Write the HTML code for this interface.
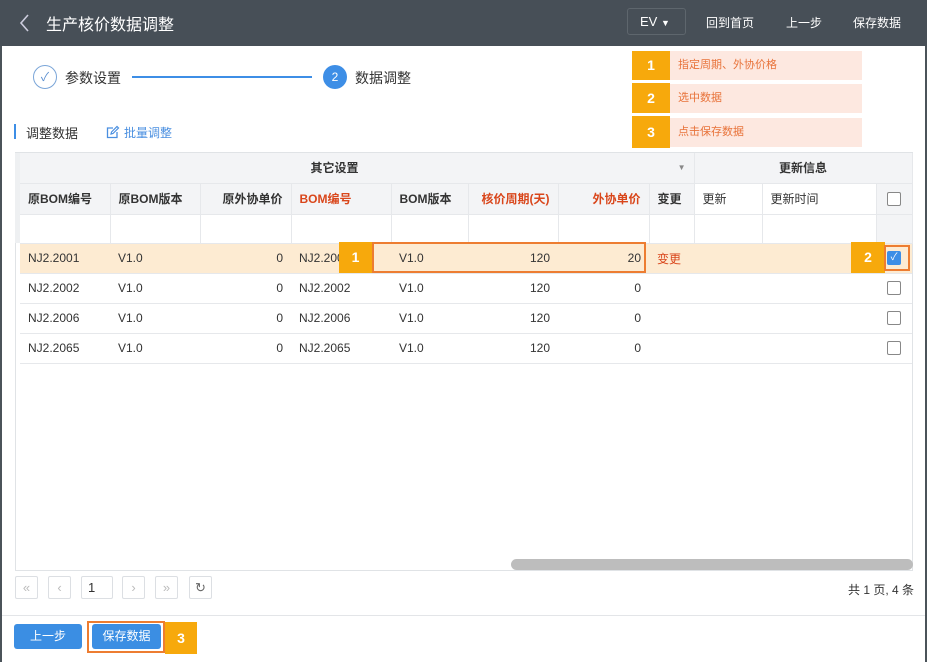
<!DOCTYPE html>
<html><head><meta charset="utf-8"><style>
*{box-sizing:border-box;margin:0;padding:0}
body{width:927px;height:662px;position:relative;background:#fff;font-family:"Liberation Sans","Noto Sans CJK SC",sans-serif;font-size:12px;color:#333;overflow:hidden}
.a{position:absolute}
.hdr{left:0;top:0;width:927px;height:46px;background:#474f57;color:#fff}
.ob{background:#f7a90c;color:#fff;font-weight:bold;font-size:14px;text-align:center}
.pk{background:#fde8e0;color:#e8733a;font-size:11px;padding-left:8px}
td,th{border-right:1px solid #e6e8eb;border-bottom:1px solid #e6e8eb;font-size:12px;padding:0 8px;white-space:nowrap;overflow:hidden}
table{border-collapse:collapse;table-layout:fixed}
th{background:#f3f4f6;font-weight:bold;color:#333;text-align:left}
.r{text-align:right}
.red{color:#d9461b}
.cb{display:inline-block;width:14px;height:14px;border:1px solid #888;border-radius:2px;background:#fff;vertical-align:middle}
.pg{width:23px;height:23px;border:1px solid #dcdfe3;border-radius:2px;color:#bbb;text-align:center;line-height:21px;font-size:13px}
.btn{background:#3b8ee3;color:#fff;border-radius:3px;text-align:center;line-height:24px;font-size:12px}
tr.d td{border-right:none}
</style></head><body>
<div class="a" style="left:0;top:0;width:2px;height:662px;background:#4b5359"></div>
<div class="a" style="right:0;top:0;width:2px;height:662px;background:#4b5359"></div>
<div class="a hdr">
 <svg class="a" style="left:18px;top:13px" width="12" height="20"><path d="M10 2 L3 10 L10 18" stroke="#ccd" stroke-width="1.6" fill="none"/></svg>
 <div class="a" style="left:46px;top:11px;font-size:16px">生产核价数据调整</div>
 <div class="a" style="left:627px;top:8px;width:59px;height:27px;border:1px solid #5e666d;border-radius:3px;font-size:13px;line-height:25px;padding-left:12px">EV <span style="font-size:9px">▼</span></div>
 <div class="a" style="left:706px;top:14px">回到首页</div>
 <div class="a" style="left:786px;top:14px">上一步</div>
 <div class="a" style="left:853px;top:14px">保存数据</div>
</div>
<div class="a" style="left:33px;top:65px;width:24px;height:24px;border:1px solid #7aa5d8;border-radius:50%;color:#5b8fd0;text-align:center;line-height:22px;font-size:12px">✓</div>
<div class="a" style="left:65px;top:68px;font-size:14px">参数设置</div>
<div class="a" style="left:132px;top:76px;width:180px;height:2px;background:#3d8ee6"></div>
<div class="a" style="left:323px;top:65px;width:24px;height:24px;border-radius:50%;background:#3d8ee6;color:#fff;text-align:center;line-height:24px;font-size:12px">2</div>
<div class="a" style="left:355px;top:68px;font-size:14px">数据调整</div>
<div class="a ob" style="left:632px;top:51px;width:38px;height:29px;line-height:29px">1</div>
<div class="a pk" style="left:670px;top:51px;width:192px;height:29px;line-height:29px">指定周期、外协价格</div>
<div class="a ob" style="left:632px;top:83px;width:38px;height:30px;line-height:30px">2</div>
<div class="a pk" style="left:670px;top:84px;width:192px;height:29px;line-height:29px">选中数据</div>
<div class="a ob" style="left:632px;top:116px;width:38px;height:32px;line-height:32px">3</div>
<div class="a pk" style="left:670px;top:118px;width:192px;height:29px;line-height:29px">点击保存数据</div>
<div class="a" style="left:14px;top:124px;width:2px;height:15px;background:#3d8ee6"></div>
<div class="a" style="left:26px;top:123px;font-size:13px">调整数据</div>
<svg class="a" style="left:106px;top:125px" width="14" height="14"><path d="M11 7 V12.5 H1.5 V3 H7" stroke="#4a8fe0" stroke-width="1.3" fill="none"/><path d="M5 9 L5.5 7 L11 1.5 L12.5 3 L7 8.5 Z" stroke="#4a8fe0" stroke-width="1.2" fill="none"/></svg>
<div class="a" style="left:124px;top:124px;color:#4a8fe0;font-size:12px">批量调整</div>
<div class="a" style="left:15px;top:152px;width:898px;height:419px;border:1px solid #e0e3e6"></div>
<div class="a" style="left:15px;top:153px;width:5px;height:90px;background:#eef0f2"></div>
<table class="a" style="left:20px;top:153px;width:892px">
<colgroup><col style="width:90px"><col style="width:90px"><col style="width:91px"><col style="width:100px"><col style="width:77px"><col style="width:90px"><col style="width:91px"><col style="width:45px"><col style="width:68px"><col style="width:114px"><col style="width:36px"></colgroup>
<tr style="height:30px"><th colspan="7" style="text-align:center;border-right:none">其它设置</th><th style="text-align:right;color:#888;font-size:8px">▼</th><th colspan="3" style="text-align:center">更新信息</th></tr>
<tr style="height:31px"><th>原BOM编号</th><th>原BOM版本</th><th class="r">原外协单价</th><th class="red">BOM编号</th><th>BOM版本</th><th class="red r">核价周期(天)</th><th class="red r">外协单价</th><th>变更</th><th style="background:#fff;font-weight:normal">更新</th><th style="background:#fff;font-weight:normal">更新时间</th><th style="text-align:center"><span class="cb"></span></th></tr>
<tr style="height:29px"><td></td><td></td><td></td><td></td><td></td><td></td><td></td><td></td><td></td><td></td><td style="background:#f3f4f6"></td></tr>
<tr class="d" style="height:30px;background:#fdebd2"><td>NJ2.2001</td><td>V1.0</td><td class="r">0</td><td>NJ2.2001</td><td>V1.0</td><td class="r">120</td><td class="r">20</td><td class="red">变更</td><td></td><td></td><td style="text-align:center"><span class="cb" style="background:#3d8ee6;border-color:#3d8ee6;color:#fff;font-size:10px;line-height:12px;text-align:center">✓</span></td></tr>
<tr class="d" style="height:30px"><td>NJ2.2002</td><td>V1.0</td><td class="r">0</td><td>NJ2.2002</td><td>V1.0</td><td class="r">120</td><td class="r">0</td><td></td><td></td><td></td><td style="text-align:center"><span class="cb"></span></td></tr>
<tr class="d" style="height:30px"><td>NJ2.2006</td><td>V1.0</td><td class="r">0</td><td>NJ2.2006</td><td>V1.0</td><td class="r">120</td><td class="r">0</td><td></td><td></td><td></td><td style="text-align:center"><span class="cb"></span></td></tr>
<tr class="d" style="height:30px"><td>NJ2.2065</td><td>V1.0</td><td class="r">0</td><td>NJ2.2065</td><td>V1.0</td><td class="r">120</td><td class="r">0</td><td></td><td></td><td></td><td style="text-align:center"><span class="cb"></span></td></tr>
</table>
<div class="a ob" style="left:339px;top:242px;width:33px;height:31px;line-height:31px">1</div>
<div class="a" style="left:372px;top:242px;width:274px;height:31px;border:2px solid #ed7d31"></div>
<div class="a ob" style="left:851px;top:242px;width:34px;height:31px;line-height:31px">2</div>
<div class="a" style="left:884px;top:245px;width:26px;height:26px;border:2px solid #ed7d31"></div>
<div class="a" style="left:511px;top:559px;width:402px;height:11px;border-radius:6px;background:#bdbdbd"></div>
<div class="a pg" style="left:15px;top:576px">«</div>
<div class="a pg" style="left:48px;top:576px">‹</div>
<div class="a pg" style="left:81px;top:576px;width:32px;color:#333;text-align:left;padding-left:6px">1</div>
<div class="a pg" style="left:122px;top:576px">›</div>
<div class="a pg" style="left:155px;top:576px">»</div>
<div class="a pg" style="left:189px;top:576px;color:#666">↻</div>
<div class="a" style="left:848px;top:581px">共 1 页, 4 条</div>
<div class="a" style="left:2px;top:615px;width:923px;height:1px;background:#e3e5e8"></div>
<div class="a btn" style="left:14px;top:624px;width:68px;height:25px">上一步</div>
<div class="a" style="left:87px;top:621px;width:78px;height:32px;border:2px solid #ed7d31"></div>
<div class="a btn" style="left:92px;top:624px;width:69px;height:25px">保存数据</div>
<div class="a ob" style="left:165px;top:622px;width:32px;height:32px;line-height:32px">3</div>
</body></html>
